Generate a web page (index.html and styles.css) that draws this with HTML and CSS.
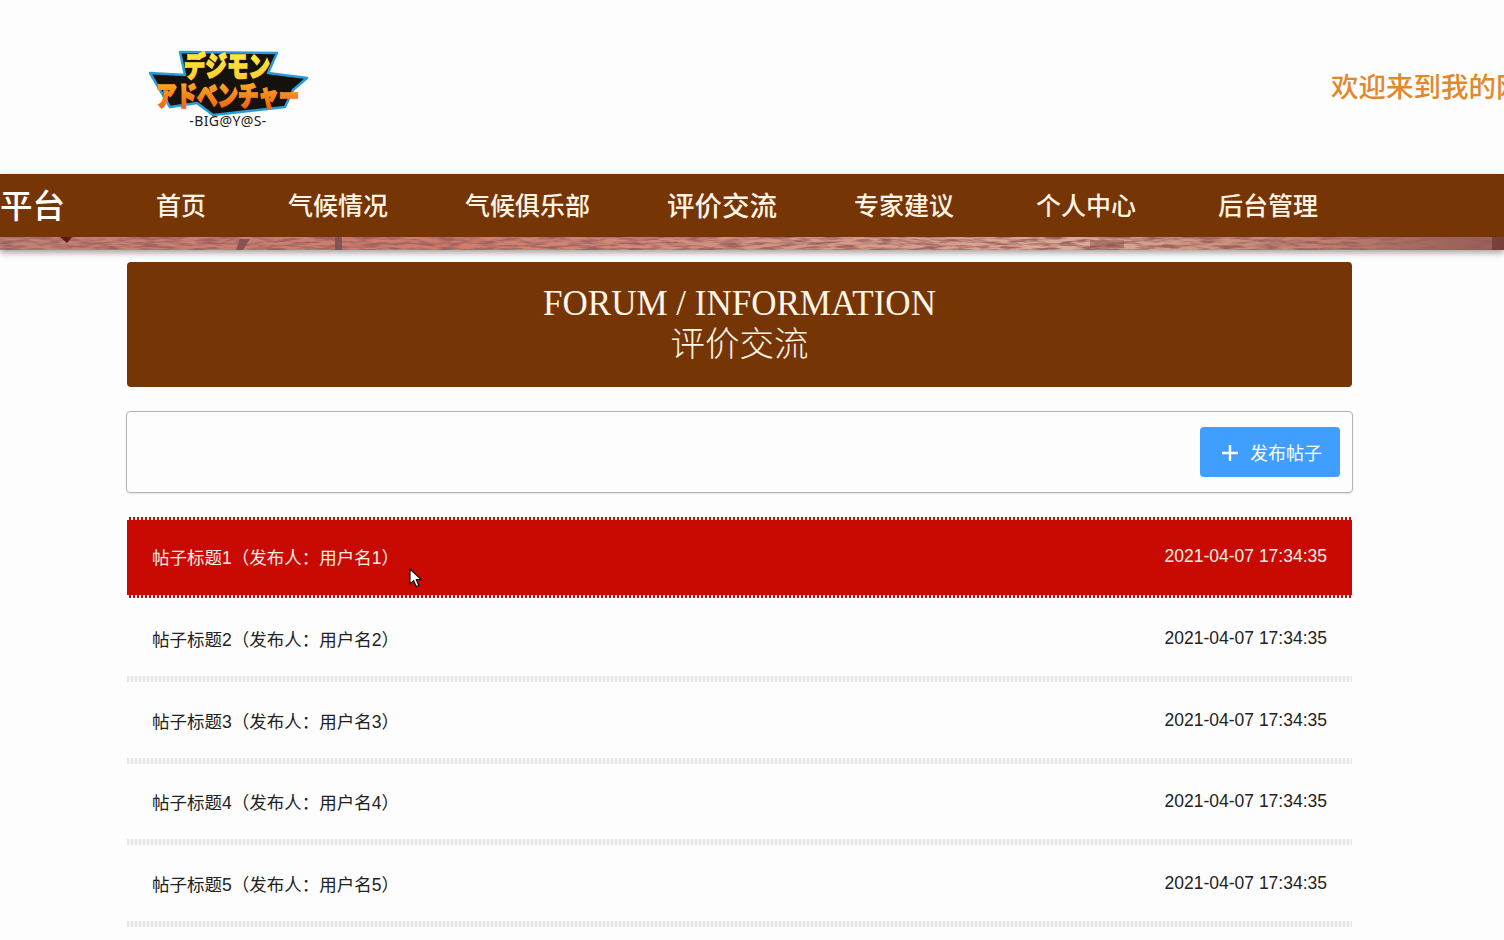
FILE: index.html
```html
<!DOCTYPE html>
<html lang="zh-CN">
<head>
  <meta charset="UTF-8" />
  <title>评价交流</title>
  <link rel="stylesheet" href="styles.css">
</head>
<body>

  <header class="top">
    <svg class="logo" width="164" height="84" viewBox="0 0 164 84">
      <defs>
        <linearGradient id="logoTop" x1="0" y1="0" x2="0" y2="1">
          <stop offset="0" stop-color="#fff24a" />
          <stop offset="1" stop-color="#ffc62a" />
        </linearGradient>
        <linearGradient id="logoBottom" x1="0" y1="0" x2="0" y2="1">
          <stop offset="0" stop-color="#ffc02a" />
          <stop offset="1" stop-color="#ee5510" />
        </linearGradient>
      </defs>
      <polygon points="33,4 130,5 121,25 160,30 146,42 138,59 66,67 50,55 23,59 3,25 38,27" fill="#15110c" stroke="#2a9ad8" stroke-width="2.5" stroke-linejoin="round" />
      <text class="logo-kana logo-top" transform="translate(37 29) scale(1 1.3)" fill="url(#logoTop)" stroke="url(#logoTop)">デジモン</text>
      <text class="logo-kana logo-bottom" transform="translate(9 58) scale(1 1.35)" fill="url(#logoBottom)" stroke="url(#logoBottom)">アドベンチャー</text>
      <text class="logo-name" x="81" y="78" text-anchor="middle">-BIG@Y@S-</text>
    </svg>
    <div class="welcome">欢迎来到我的网站</div>
  </header>

  <nav class="nav">
    <div class="nav-bar">
      <span class="brand">平台</span>
      <a class="nav-item nav-first">首页</a>
      <a class="nav-item">气候情况</a>
      <a class="nav-item">气候俱乐部</a>
      <a class="nav-item nav-active">评价交流</a>
      <a class="nav-item nav-wide">专家建议</a>
      <a class="nav-item nav-wide">个人中心</a>
      <a class="nav-item">后台管理</a>
    </div>
    <svg class="nav-strip" width="1504" height="13" viewBox="0 0 1504 13" preserveAspectRatio="none">
      <defs>
        <linearGradient id="stripBase">
          <stop offset="0" stop-color="#c08376" />
          <stop offset="0.3" stop-color="#d07c6c" />
          <stop offset="0.55" stop-color="#d39a88" />
          <stop offset="0.72" stop-color="#d8ae98" />
          <stop offset="0.88" stop-color="#c0806e" />
          <stop offset="1" stop-color="#8e5a50" />
        </linearGradient>
        <filter id="stripNoise" x="0" y="0" width="100%" height="100%">
          <feTurbulence type="fractalNoise" baseFrequency="0.05 0.35" numOctaves="3" seed="7" />
          <feColorMatrix values="0 0 0 0 0.35  0 0 0 0 0.12  0 0 0 0 0.12  3.2 0 0 0 -1.25" />
        </filter>
      </defs>
      <rect width="1504" height="13" fill="url(#stripBase)" />
      <rect width="1504" height="13" filter="url(#stripNoise)" />
      <polygon points="60,0 72,0 67,6" fill="#5a1a1a" />
      <polygon points="240,2 250,2 243,13 236,13" fill="#7a4a48" opacity="0.8" />
      <rect x="335" y="0" width="7" height="13" fill="#6e4a50" opacity="0.75" />
      <rect x="1090" y="3" width="34" height="8" fill="#8a5048" opacity="0.45" />
      <rect x="1492" y="0" width="12" height="13" fill="#6e3a34" opacity="0.8" />
    </svg>
  </nav>

  <main class="content">
    <section class="title-panel">
      <div class="title-en">FORUM / INFORMATION</div>
      <div class="title-cn">评价交流</div>
    </section>

    <section class="toolbar">
      <button class="add-btn">
        <svg width="16" height="16" viewBox="0 0 16 16"><path d="M8 0v16M0 8h16" stroke="#fff" stroke-width="2.4" fill="none" /></svg>
        <span>发布帖子</span>
      </button>
    </section>

    <ul class="post-list">
      <li class="post post-hover"><span>帖子标题1（发布人：用户名1）</span><span class="post-date">2021-04-07 17:34:35</span></li>
      <li class="post"><span>帖子标题2（发布人：用户名2）</span><span class="post-date">2021-04-07 17:34:35</span></li>
      <li class="post"><span>帖子标题3（发布人：用户名3）</span><span class="post-date">2021-04-07 17:34:35</span></li>
      <li class="post"><span>帖子标题4（发布人：用户名4）</span><span class="post-date">2021-04-07 17:34:35</span></li>
      <li class="post"><span>帖子标题5（发布人：用户名5）</span><span class="post-date">2021-04-07 17:34:35</span></li>
    </ul>
  </main>

  <svg class="cursor" width="13" height="20" viewBox="0 0 13 20">
    <path d="M1 1v15l3.6-3.4 2.6 6 2.6-1.1-2.6-5.9h5z" fill="#fff" stroke="#111" stroke-width="1.2" stroke-linejoin="round" />
  </svg>

</body>
</html>
```

FILE: styles.css
```css
:root {
  --brown: #763504;
  --red: #c80a02;
  --blue: #409eff;
}
* {
  margin: 0;
  padding: 0;
  box-sizing: border-box;
}
html, body {
  height: 100%;
  overflow: hidden;
}
body {
  background: #fdfdfd;
  color: #222;
  font-family: 'Liberation Sans', 'Noto Sans CJK SC', sans-serif;
  position: relative;
}
.top {
  height: 174px;
  display: flex;
  align-items: flex-start;
  justify-content: space-between;
  padding-left: 147px;
  overflow: hidden;
}
.logo {
  margin-top: 48px;
  flex: none;
}
.logo-kana {
  font-family: 'Noto Sans CJK JP', sans-serif;
  font-weight: 900;
  stroke-width: 1.2px;
}
.logo-top {
  font-size: 21.5px;
}
.logo-bottom {
  font-size: 20.5px;
}
.logo-name {
  font-family: 'Noto Sans', sans-serif;
  font-size: 14px;
  letter-spacing: 0.4px;
  fill: #222;
}
.welcome {
  flex: none;
  width: 173px;
  margin-top: 68px;
  font-size: 27.5px;
  font-weight: 500;
  line-height: 40px;
  color: #e2872c;
  white-space: nowrap;
}
.nav {
  height: 76px;
  box-shadow: 0 3px 6px rgba(0,0,0,0.35);
}
.nav-bar {
  height: 63px;
  padding-bottom: 4px;
  background: var(--brown);
  display: flex;
  align-items: center;
  color: #fff4e6;
}
.brand {
  width: 65px;
  margin-right: 91px;
  font-size: 32.5px;
  font-weight: 500;
  color: #fff;
}
.nav-item {
  font-size: 25px;
  font-weight: 500;
  margin-right: 77px;
}
.nav-first,
.nav-wide {
  margin-right: 82px;
}
.nav-active {
  font-size: 27.5px;
}
.nav-strip {
  display: block;
}
.content {
  width: 1225px;
  margin: 12px 0 0 127px;
}
.title-panel {
  height: 125px;
  padding-top: 21px;
  background: var(--brown);
  border-radius: 4px;
  color: #fff6ea;
  text-align: center;
  font-family: 'Liberation Serif', 'Noto Sans CJK SC', serif;
}
.title-en {
  font-size: 35px;
  line-height: 41px;
}
.title-cn {
  font-size: 34.5px;
  line-height: 41px;
  font-weight: 300;
}
.toolbar {
  height: 82px;
  margin: 24px -1px 0;
  padding-right: 12px;
  border: 1px solid #b4b4b4;
  border-radius: 4px;
  box-shadow: 0 1px 2px rgba(0,0,0,0.1);
  display: flex;
  align-items: center;
  justify-content: flex-end;
}
.add-btn {
  width: 140px;
  height: 50px;
  padding-left: 4px;
  border: none;
  border-radius: 4px;
  background: var(--blue);
  color: #fff;
  font-family: inherit;
  font-size: 18px;
  display: flex;
  align-items: center;
  justify-content: center;
  gap: 12px;
}
.add-btn svg {
  margin-top: 2px;
}
.post-list {
  list-style: none;
  margin-top: 24px;
}
.post {
  height: 81.5px;
  padding: 0 25px 5px;
  display: flex;
  align-items: center;
  justify-content: space-between;
  font-size: 17.5px;
  color: #222;
  background: repeating-linear-gradient(90deg, #e6e6e6 0 2.5px, #f6f6f6 2.5px 4px) left bottom / 100% 6px no-repeat;
}
.post-hover {
  margin-bottom: 2px;
  padding-top: 2px;
  color: #ffeee6;
  background:
    repeating-linear-gradient(90deg, #fdfdfd 0 2px, transparent 2px 4px) left top / 100% 3px no-repeat,
    repeating-linear-gradient(90deg, #fdfdfd 0 2px, transparent 2px 4px) left bottom 1px / 100% 3px no-repeat,
    linear-gradient(var(--red), var(--red)) left top / 100% 81px no-repeat;
}
.post-date {
  font-size: 17.5px;
}
.cursor {
  position: absolute;
  left: 409px;
  top: 568px;
}
```
